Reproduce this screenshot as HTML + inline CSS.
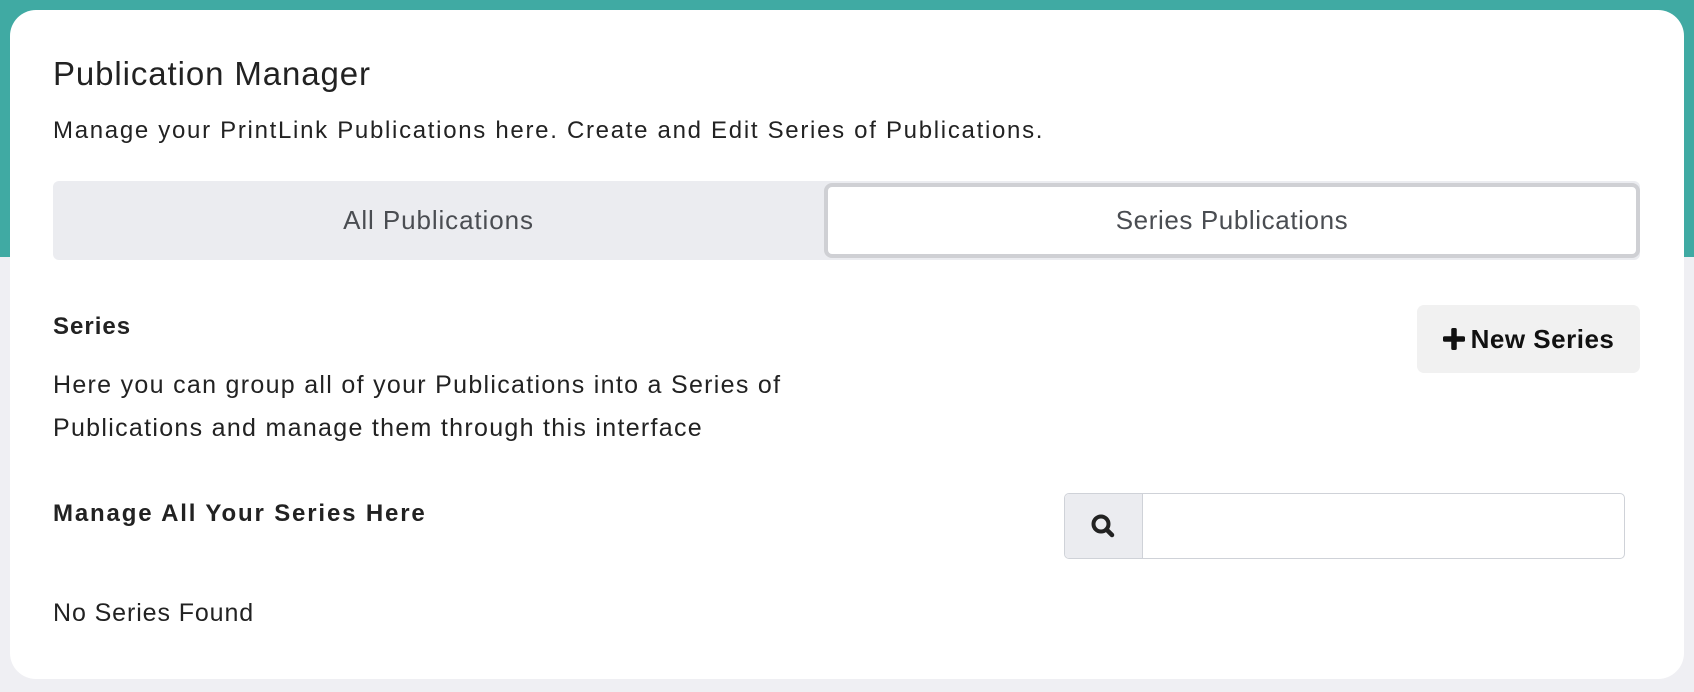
<!DOCTYPE html>
<html><head><style>
html,body{margin:0;padding:0}
body{width:1694px;height:692px;background:#efeff3;position:relative;overflow:hidden;font-family:"Liberation Sans",sans-serif;color:#222}
.band{position:absolute;left:0;top:0;width:1694px;height:257px;background:#40aaa3}
.card{position:absolute;left:10px;top:10px;width:1674px;height:669px;background:#fff;border-radius:26px}
.a{position:absolute;white-space:nowrap}
.tabs{position:absolute;left:53px;top:181px;width:1587px;height:79px;background:#ebecf0;border-radius:6px}
.tab2{position:absolute;left:771px;top:2px;width:808px;height:67px;background:#fff;border:4px solid #cfd0d4;border-radius:8px;text-align:center;line-height:67px;font-size:26px;letter-spacing:0.6px;color:#4a4d52}
.btn{position:absolute;left:1417px;top:305px;width:223px;height:68px;background:#f1f1f1;border-radius:7px;font-weight:bold;font-size:26px;letter-spacing:0.5px;line-height:68px;text-align:center;color:#111}
.search{position:absolute;left:1064px;top:493px;width:559px;height:64px;border:1px solid #cfd2d8;border-radius:5px;overflow:hidden}
.addon{position:absolute;left:0;top:0;width:77px;height:64px;background:#ebecf0;border-right:1px solid #cfd2d8}
</style></head><body>
<div class="band"></div>
<div class="card"></div>
<div class="a" style="left:53px;top:55px;font-size:33px;letter-spacing:0.9px;color:#222">Publication Manager</div>
<div class="a" style="left:53px;top:117px;font-size:24px;letter-spacing:1.7px;color:#222">Manage your PrintLink Publications here. Create and Edit Series of Publications.</div>
<div class="tabs">
<div class="a" style="left:0;width:771px;top:0;line-height:79px;text-align:center;font-size:26px;letter-spacing:0.9px;color:#4a4d52">All Publications</div>
<div class="tab2">Series Publications</div>
</div>
<div class="a" style="left:53px;top:313px;font-size:24px;letter-spacing:1px;font-weight:bold">Series</div>
<div class="a" style="left:53px;top:364px;font-size:25px;letter-spacing:1.3px;line-height:43px">Here you can group all of your Publications into a Series of<br>Publications and manage them through this interface</div>
<div class="btn"><svg width="22" height="22" viewBox="0 0 20 20" style="vertical-align:-2px;margin-right:6px"><rect x="7.5" y="0" width="5" height="20" rx="1.5" fill="#111"/><rect x="0" y="7.5" width="20" height="5" rx="1.5" fill="#111"/></svg>New Series</div>
<div class="a" style="left:53px;top:500px;font-size:24px;letter-spacing:1.85px;font-weight:bold">Manage All Your Series Here</div>
<div class="search"><div class="addon"><svg width="26" height="26" viewBox="0 0 26 26" style="position:absolute;left:25px;top:19px"><circle cx="11" cy="11" r="7.5" fill="none" stroke="#222" stroke-width="4"/><line x1="16.5" y1="16.5" x2="22" y2="22" stroke="#222" stroke-width="4.5" stroke-linecap="round"/></svg></div></div>
<div class="a" style="left:53px;top:599px;font-size:25px;letter-spacing:0.9px">No Series Found</div>
</body></html>
